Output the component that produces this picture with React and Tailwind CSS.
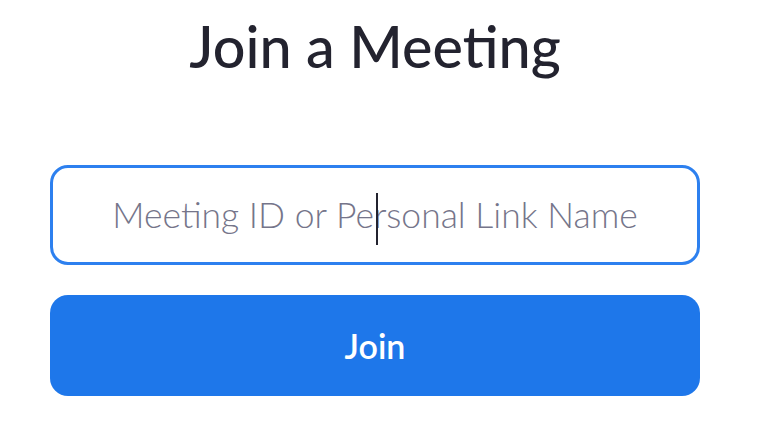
import React from 'react';

const App = () => {
  return (
    <div className="w-[768px] h-[448px] bg-white pl-[50px] overflow-hidden font-['Lato',sans-serif]">
      <div className="w-[650px] flex flex-col items-center">
        <h1 className="mt-[12px] text-[57.5px] leading-[68px] font-medium text-[#23232f]">
          Join a Meeting
        </h1>

        <div className="mt-[85px] w-[650px] h-[100px] rounded-[18px] border-[3px] border-[#2d80ef] flex items-center justify-center">
          <div className="text-[35.5px] text-[#75758a] font-light whitespace-nowrap">
            Meeting ID or Pe
            <span className="relative inline-block w-0 h-0">
              <span className="absolute left-[2px] top-[-35px] w-[2px] h-[52px] bg-[#23232f]" />
            </span>
            rsonal Link Name
          </div>
        </div>

        <button className="mt-[30px] w-[650px] h-[101px] rounded-[18px] bg-[#1e77ea] text-white text-[34px] font-semibold flex items-center justify-center">
          Join
        </button>
      </div>
    </div>
  );
};

export default App;
